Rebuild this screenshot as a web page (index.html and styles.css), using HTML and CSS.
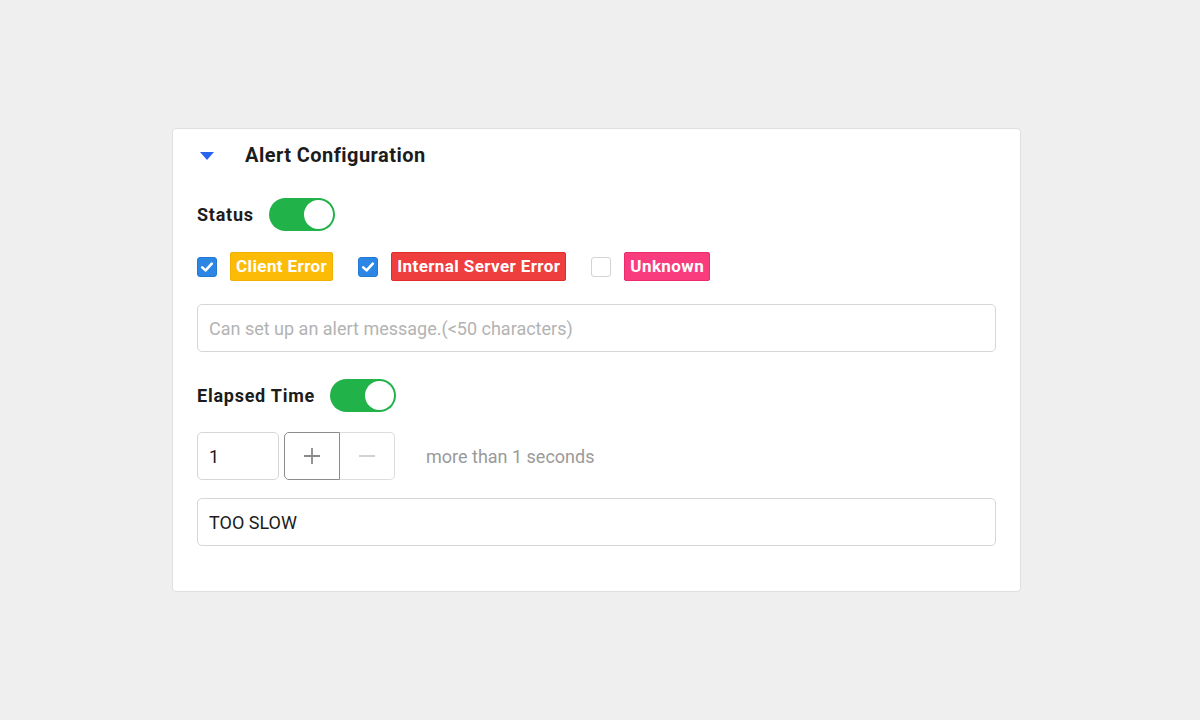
FILE: index.html
```html
<!DOCTYPE html>
<html lang="en">
<head>
<meta charset="utf-8">
<title>Alert Configuration</title>
<link rel="stylesheet" href="styles.css">
</head>
<body>
<div class="page">
  <section class="card">
    <header class="card-head">
      <svg class="caret" width="16" height="10" viewBox="0 0 16 10"><polygon points="1,1 15,1 8,9" fill="#2a63ee"/></svg>
      <h2 class="title">Alert Configuration</h2>
    </header>

    <div class="row row-status">
      <span class="label">Status</span>
      <span class="toggle"><span class="knob"></span></span>
    </div>

    <div class="row row-checks">
      <label class="check-item">
        <span class="box checked"><svg width="20" height="20" viewBox="0 0 20 20"><path d="M5.2 10.4 L8.6 13.4 L14.8 6.6" fill="none" stroke="#fff" stroke-width="2.6" stroke-linecap="round" stroke-linejoin="round"/></svg></span>
        <span class="tag tag-yellow">Client Error</span>
      </label>
      <label class="check-item">
        <span class="box checked"><svg width="20" height="20" viewBox="0 0 20 20"><path d="M5.2 10.4 L8.6 13.4 L14.8 6.6" fill="none" stroke="#fff" stroke-width="2.6" stroke-linecap="round" stroke-linejoin="round"/></svg></span>
        <span class="tag tag-red">Internal Server Error</span>
      </label>
      <label class="check-item">
        <span class="box"></span>
        <span class="tag tag-pink">Unknown</span>
      </label>
    </div>

    <div class="field field-msg">
      <span class="placeholder">Can set up an alert message.(&lt;50 characters)</span>
    </div>

    <div class="row row-elapsed">
      <span class="label">Elapsed Time</span>
      <span class="toggle"><span class="knob"></span></span>
    </div>

    <div class="row row-number">
      <div class="num-input">1</div>
      <div class="stepper">
        <span class="step step-plus"><svg width="20" height="20" viewBox="0 0 20 20"><path d="M10 2 V18 M2 10 H18" stroke="#8a8a8a" stroke-width="1.8"/></svg></span>
        <span class="step step-minus"><svg width="20" height="20" viewBox="0 0 20 20"><path d="M2 10 H18" stroke="#d2d2d2" stroke-width="2"/></svg></span>
      </div>
      <span class="hint">more than 1 seconds</span>
    </div>

    <div class="field field-slow">
      <span class="value">TOO SLOW</span>
    </div>
  </section>
</div>
</body>
</html>
```

FILE: styles.css
```css
* { box-sizing: border-box; }

html, body {
  margin: 0;
  padding: 0;
}

body {
  background: #efefef;
  font-family: Roboto, "Noto Sans", "Liberation Sans", sans-serif;
  color: #1c1c1c;
  width: 1200px;
  height: 720px;
}

.page {
  padding-top: 128px;
  padding-left: 172px;
}

.card {
  width: 849px;
  height: 464px;
  background: #fff;
  border: 1px solid #e0e0e0;
  border-radius: 4px;
  padding: 0 24px 0 24px;
}

.card-head {
  height: 52px;
  display: flex;
  align-items: center;
}

.caret {
  margin-left: 2px;
  margin-top: 2px;
  display: block;
}

.title {
  margin: 0 0 0 30px;
  font-size: 20px;
  font-weight: 700;
  color: #1c1c1c;
  letter-spacing: 0.45px;
}

.row {
  display: flex;
  align-items: center;
}

.label {
  font-size: 18px;
  font-weight: 700;
  letter-spacing: 0.75px;
  color: #1c1c1c;
}

.row-status {
  margin-top: 17px;
  height: 33px;
}

.row-status .toggle { margin-left: 15px; }

.toggle {
  width: 66px;
  height: 33px;
  border-radius: 17px;
  background: #22b24a;
  display: flex;
  align-items: center;
  justify-content: flex-end;
  padding: 2px;
}

.knob {
  width: 29px;
  height: 29px;
  border-radius: 50%;
  background: #fff;
}

.row-checks {
  margin-top: 21px;
  height: 29px;
  gap: 25px;
}

.check-item {
  display: flex;
  align-items: center;
}

.box {
  width: 20px;
  height: 20px;
  border: 1px solid #d3d3d3;
  border-radius: 3px;
  background: #fff;
  display: flex;
  align-items: center;
  justify-content: center;
  margin-right: 13px;
}

.box.checked {
  background: #2b86e4;
  border-color: #2378d6;
}

.box svg { display: block; flex: none; }

.tag {
  height: 29px;
  line-height: 27px;
  padding: 0 5px;
  border-radius: 2px;
  font-size: 17px;
  font-weight: 700;
  letter-spacing: 0.4px;
  color: #fff;
  border: 1px solid transparent;
}

.tag-yellow { background: #fcbb06; border-color: #f1b000; }
.tag-red { background: #ef3e3e; border-color: #df2c2c; }
.tag-pink { background: #f93c7d; border-color: #ea2c6d; }

.field {
  height: 48px;
  border: 1px solid #d6d6d6;
  border-radius: 5px;
  display: flex;
  align-items: center;
  padding: 0 11px;
  font-size: 18px;
}

.field-msg { margin-top: 23px; }

.placeholder { color: #b3b3b3; }

.row-elapsed {
  margin-top: 27px;
  height: 33px;
}

.row-elapsed .toggle { margin-left: 15px; }

.row-number {
  margin-top: 20px;
  height: 48px;
}

.num-input {
  width: 82px;
  height: 48px;
  border: 1px solid #d6d6d6;
  border-radius: 5px;
  display: flex;
  align-items: center;
  padding: 0 11px;
  font-size: 18px;
  color: #1c1c1c;
}

.stepper {
  display: flex;
  margin-left: 5px;
  height: 48px;
}

.step {
  width: 56px;
  height: 48px;
  display: flex;
  align-items: center;
  justify-content: center;
}

.step svg { display: block; }

.step-plus {
  border: 1px solid #8c8c8c;
  border-radius: 5px 0 0 5px;
}

.step-minus {
  border: 1px solid #dcdcdc;
  border-left: none;
  border-radius: 0 5px 5px 0;
  width: 55px;
}

.hint {
  margin-left: 31px;
  font-size: 18px;
  color: #9a9a9a;
}

.field-slow { margin-top: 18px; }

.value { color: #1c1c1c; }
```
